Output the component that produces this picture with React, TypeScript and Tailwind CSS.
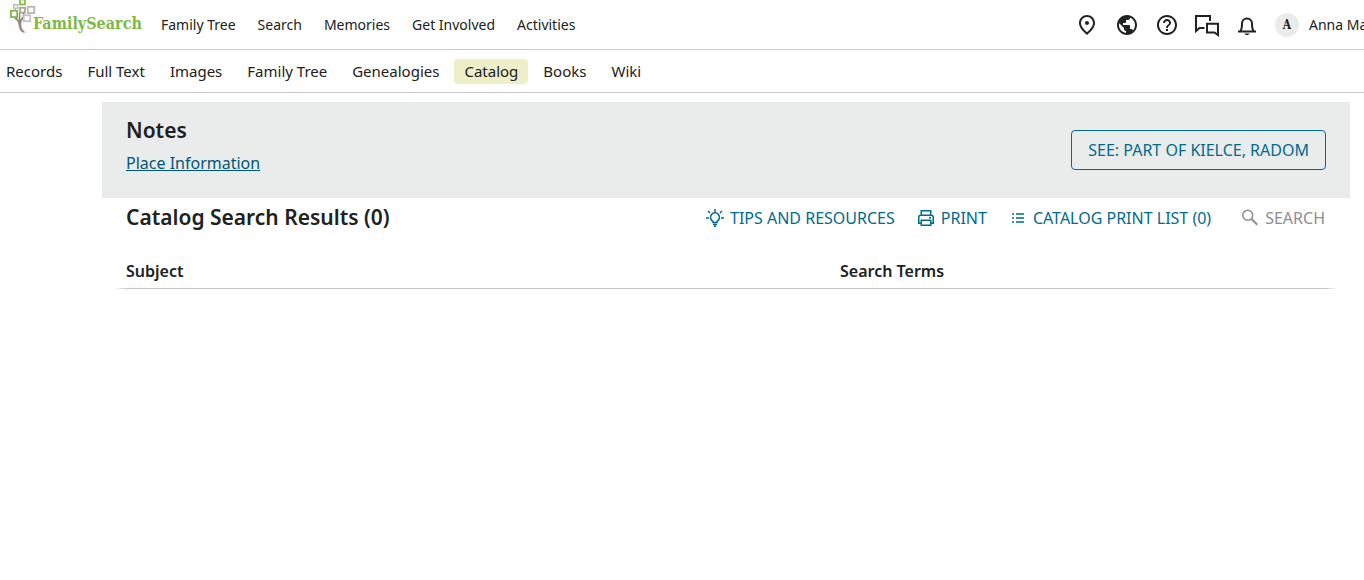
import { MdHelpOutline, MdOutlinePlace, MdPublic } from "react-icons/md"

const mainLinks = ["Family Tree", "Search", "Memories", "Get Involved", "Activities"]

const subLinks = ["Records", "Full Text", "Images", "Family Tree", "Genealogies", "Catalog", "Books", "Wiki"]

const Logo = () => (
  <a href="#" className="flex items-start w-[133px] h-[34px] shrink-0">
    <svg width="26" height="34" viewBox="0 0 26 34" fill="none" className="shrink-0" aria-hidden="true">
      <path d="M4.500 17.500h2c1 .5 1.800 1.500 2.300 3V13h1.600v6.500c.6-1.200 1.600-2 2.300-3V13h1.800v5c-2.500 2-3.700 4-3.200 8 .4 3 2 5 4.500 6.500h-3.300c-2.800-1.500-3.500-5-4-8-.3-2.500-1.500-4.500-4-5.500z" fill="#958878" />
      <path d="M5.500 9v2" stroke="#b5aa9c" />
      <rect x="10" y="-0.500" width="5" height="5" stroke="#80b941" strokeWidth="1.700" />
      <rect x="3.750" y="4.750" width="4" height="3.500" stroke="#bfbdbb" strokeWidth="1.500" />
      <rect x="0.900" y="10.750" width="6.300" height="6.300" fill="#fff" stroke="#80b941" strokeWidth="1.800" />
      <rect x="10" y="7.750" width="5" height="4.750" stroke="#aaa196" strokeWidth="1.700" />
      <rect x="17.750" y="6.750" width="6.500" height="6.250" stroke="#b9b5b1" strokeWidth="1.800" />
      <rect x="13.750" y="15.250" width="6.500" height="6" fill="#fff" stroke="#c2c4c6" strokeWidth="1.800" />
    </svg>
    <span className="mt-3 -ml-[3px] text-base leading-6 font-bold text-[#80b941] font-['DejaVu_Serif_Condensed','DejaVu_Serif',serif]">FamilySearch</span>
  </a>
)

const ChatIcon = () => (
  <svg width="24" height="24" viewBox="0 0 24 24" fill="none" stroke="currentColor" strokeWidth="2" aria-hidden="true">
    <path d="M9.500 15H4.500L1 18V3h14v5" />
    <path d="M12 10.750h11V22l-3.500-2.500H12z" />
  </svg>
)

const BellIcon = () => (
  <svg width="24" height="24" viewBox="0 0 24 24" fill="none" aria-hidden="true">
    <path d="M3 18.500h18M5.500 18c1.500-2 1.500-4 1.500-7.500a5 5 0 0 1 10 0c0 3.500 0 5.500 1.500 7.500" stroke="currentColor" strokeWidth="2" />
    <path d="M9.500 20.500h5c-.5 1-1.400 1.500-2.500 1.500s-2-.5-2.500-1.500z" fill="currentColor" />
  </svg>
)

const TipsIcon = () => (
  <svg width="24" height="24" viewBox="0 0 24 24" fill="none" stroke="currentColor" strokeWidth="1.500" aria-hidden="true">
    <path d="M10 16.500v-1.200a4.500 4.500 0 1 1 4 0v1.200zM10 18.500h4M11 20.250h2M12 3v3M3 12h3M18 12h3M5 5l2 2M19 5l-2 2" />
  </svg>
)

const PrintIcon = () => (
  <svg width="24" height="24" viewBox="0 0 24 24" fill="none" stroke="currentColor" strokeWidth="1.500" aria-hidden="true">
    <path d="M7.250 9V4.750h9.500V9M7 17.250H4.750v-6a2 2 0 0 1 2-2h10.500a2 2 0 0 1 2 2v6H17M7.250 14.250h9.500v5h-9.500zM15 11.750h2" />
  </svg>
)

const ListIcon = () => (
  <svg width="24" height="24" viewBox="0 0 24 24" fill="none" stroke="currentColor" strokeWidth="1.500" aria-hidden="true">
    <path d="M6 8h2M6 12h2M6 16h2M10 8h8M10 12h8M10 16h8" />
  </svg>
)

const SearchIcon = () => (
  <svg width="24" height="24" viewBox="0 0 24 24" fill="none" stroke="currentColor" strokeWidth="1.500" aria-hidden="true">
    <circle cx="9.750" cy="9.250" r="5" />
    <path d="M13.300 12.800l6 6" strokeWidth="2" />
  </svg>
)

const headerIcons = [
  { label: "Places", icon: <MdOutlinePlace size={24} /> },
  { label: "Language", icon: <MdPublic size={24} /> },
  { label: "Help", icon: <MdHelpOutline size={24} /> },
  { label: "Messages", icon: <ChatIcon /> },
  { label: "Notifications", icon: <BellIcon /> },
]

const actions = [
  { label: "TIPS AND RESOURCES", icon: <TipsIcon /> },
  { label: "PRINT", icon: <PrintIcon /> },
  { label: "CATALOG PRINT LIST (0)", icon: <ListIcon /> },
]

const Header = () => (
  <header className="flex h-[50px] border-b border-[#c7c8c8] pl-[10px]">
    <Logo />
    <nav className="flex items-center gap-[22px] pl-[18px] text-sm whitespace-nowrap">
      {mainLinks.map((link) => (
        <a key={link} href="#">{link}</a>
      ))}
    </nav>
    <div className="ml-auto flex items-center gap-4">
      {headerIcons.map((item) => (
        <button key={item.label} type="button" aria-label={item.label}>{item.icon}</button>
      ))}
      <button type="button" className="flex items-center gap-[10px]">
        <span className="flex size-6 items-center justify-center rounded-full bg-[#eaebeb] text-xs font-bold font-['DejaVu_Serif_Condensed','DejaVu_Serif',serif]">A</span>
        <span className="w-[55px] text-left text-sm whitespace-nowrap">Anna Ma</span>
      </button>
    </div>
  </header>
)

const SubNav = () => (
  <nav className="flex h-[43px] items-center gap-[5px] border-b border-[#c7c8c8] -ml-1 text-[15px] whitespace-nowrap">
    {subLinks.map((link) => (
      <a key={link} href="#" className={link === "Catalog" ? "rounded bg-[#eeeec8] px-[10px] leading-[25px]" : "px-[10px] leading-[25px]"}>
        {link}
      </a>
    ))}
  </nav>
)

const App = () => {
  return (
    <div className="overflow-x-hidden bg-white text-[#202121] font-['Noto_Sans',sans-serif]">
      <Header />
      <SubNav />
      <main className="pt-[9px] pr-[14px] pl-[102px]">
        <section className="flex h-24 items-center justify-between bg-[#eaebeb] px-6">
          <div className="flex flex-col gap-[6px] pb-[10px]">
            <h2 className="text-[21px] font-semibold leading-[30px]">Notes</h2>
            <a href="#" className="text-base leading-6 text-[#005779] underline">Place Information</a>
          </div>
          <button type="button" className="h-10 rounded border border-[#006b8f] px-4 text-base text-[#006b8f]">SEE: PART OF KIELCE, RADOM</button>
        </section>
        <section>
          <div className="flex h-10 items-center justify-between pr-[25px] pl-6">
            <h2 className="pb-[2px] text-[21px] leading-[30px] font-semibold">Catalog Search Results (0)</h2>
            <div className="flex items-center gap-[19px] text-base text-[#006b8f]">
              {actions.map((action) => (
                <button key={action.label} type="button" className="flex items-center gap-[3px]">
                  {action.icon}
                  {action.label}
                </button>
              ))}
              <button type="button" disabled className="ml-2 flex items-center gap-[3px] text-[#8c8e8e]">
                <SearchIcon />
                SEARCH
              </button>
            </div>
          </div>
          <div className="px-3 pt-4">
            <table className="w-full table-fixed text-left">
              <thead>
                <tr>
                  <th scope="col" className="w-7/12 px-3 py-[5px] font-semibold">Subject</th>
                  <th scope="col" className="px-3 py-[5px] font-semibold">Search Terms</th>
                </tr>
              </thead>
            </table>
            <div className="h-px bg-linear-to-r from-transparent from-0% via-[#c7c8c8] via-1% to-[#c7c8c8] mask-r-from-99%" />
          </div>
        </section>
      </main>
    </div>
  )
}

export default App
